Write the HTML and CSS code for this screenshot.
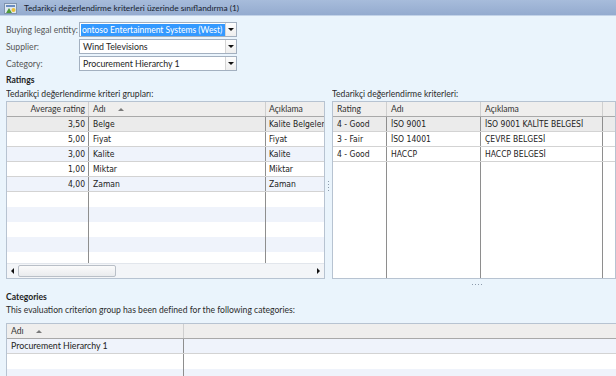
FILE: index.html
```html
<!DOCTYPE html>
<html lang="tr">
<head>
    <meta charset="UTF-8">
    <title>Tedarikçi değerlendirme</title>
    <link rel="stylesheet" href="styles.css">
</head>
<body>
    <div class="titlebar">
        <svg class="title-icon" width="13" height="12" viewBox="0 0 13 12">
            <rect x="0.5" y="1.5" width="12" height="10" fill="#dfe8f2" stroke="#7f93ad"/>
            <rect x="2" y="3" width="9" height="2" fill="#6a8cc0"/>
            <path d="M2 11 L5 6 L8 11 Z" fill="#4f9a3a"/>
            <circle cx="9.5" cy="8" r="2" fill="#e9c03a"/>
        </svg>
        <span>Tedarikçi değerlendirme kriterleri üzerinde sınıflandırma (1)</span>
    </div>

    <div class="header-form">
        <div class="field-row">
            <label>Buying legal entity:</label>
            <div class="combo">
                <div class="combo-text"><span class="selected-text">ontoso Entertainment Systems (West)</span></div>
                <div class="combo-btn"><span class="arrow-down"></span></div>
            </div>
        </div>
        <div class="field-row">
            <label>Supplier:</label>
            <div class="combo">
                <div class="combo-text">Wind Televisions</div>
                <div class="combo-btn"><span class="arrow-down"></span></div>
            </div>
        </div>
        <div class="field-row">
            <label>Category:</label>
            <div class="combo">
                <div class="combo-text">Procurement Hierarchy 1</div>
                <div class="combo-btn"><span class="arrow-down"></span></div>
            </div>
        </div>
    </div>

    <div class="section-title">Ratings</div>

    <div class="panes">
        <div class="pane pane-left">
            <div class="grid-label">Tedarikçi değerlendirme kriteri grupları:</div>
            <div class="grid grid-groups">
                <div class="grid-body">
                    <div class="row head">
                        <div class="cell g1 num">Average rating</div>
                        <div class="cell g2">Adı <span class="sort-up"></span></div>
                        <div class="cell g3">Açıklama</div>
                    </div>
                    <div class="row data current">
                        <div class="cell g1 num">3,50</div><div class="cell g2">Belge</div><div class="cell g3">Kalite Belgeler</div>
                    </div>
                    <div class="row data">
                        <div class="cell g1 num">5,00</div><div class="cell g2">Fiyat</div><div class="cell g3">Fiyat</div>
                    </div>
                    <div class="row data alt">
                        <div class="cell g1 num">3,00</div><div class="cell g2">Kalite</div><div class="cell g3">Kalite</div>
                    </div>
                    <div class="row data">
                        <div class="cell g1 num">1,00</div><div class="cell g2">Miktar</div><div class="cell g3">Miktar</div>
                    </div>
                    <div class="row data alt">
                        <div class="cell g1 num">4,00</div><div class="cell g2">Zaman</div><div class="cell g3">Zaman</div>
                    </div>
                    <div class="row filler"><div class="cell g1"></div><div class="cell g2"></div><div class="cell g3"></div></div>
                    <div class="row filler alt"><div class="cell g1"></div><div class="cell g2"></div><div class="cell g3"></div></div>
                    <div class="row filler"><div class="cell g1"></div><div class="cell g2"></div><div class="cell g3"></div></div>
                    <div class="row filler alt"><div class="cell g1"></div><div class="cell g2"></div><div class="cell g3"></div></div>
                    <div class="row filler"><div class="cell g1"></div><div class="cell g2"></div><div class="cell g3"></div></div>
                </div>
                <div class="hscroll">
                    <div class="sb-btn"><span class="arrow-left"></span></div>
                    <div class="sb-track"><div class="sb-thumb"></div></div>
                    <div class="sb-btn"><span class="arrow-right"></span></div>
                </div>
            </div>
        </div>

        <div class="vsplit"><span class="dots-v"></span></div>

        <div class="pane pane-right">
            <div class="grid-label">Tedarikçi değerlendirme kriterleri:</div>
            <div class="grid grid-criteria">
                <div class="grid-body">
                    <div class="row head">
                        <div class="cell r1">Rating</div>
                        <div class="cell r2">Adı</div>
                        <div class="cell r3">Açıklama</div>
                        <div class="cell r4"></div>
                    </div>
                    <div class="row data current">
                        <div class="cell r1">4 - Good</div><div class="cell r2">İSO 9001</div><div class="cell r3">İSO 9001 KALİTE BELGESİ</div><div class="cell r4"></div>
                    </div>
                    <div class="row data">
                        <div class="cell r1">3 - Fair</div><div class="cell r2">İSO 14001</div><div class="cell r3">ÇEVRE BELGESİ</div><div class="cell r4"></div>
                    </div>
                    <div class="row data">
                        <div class="cell r1">4 - Good</div><div class="cell r2">HACCP</div><div class="cell r3">HACCP BELGESİ</div><div class="cell r4"></div>
                    </div>
                    <div class="row filler tall"><div class="cell r1"></div><div class="cell r2"></div><div class="cell r3"></div><div class="cell r4"></div></div>
                </div>
            </div>
        </div>
    </div>

    <div class="hsplit"><span class="dots-h"></span></div>

    <div class="section-title">Categories</div>
    <div class="section-desc">This evaluation criterion group has been defined for the following categories:</div>

    <div class="grid grid-categories">
        <div class="row head">
            <div class="cell k1">Adı <span class="sort-up"></span></div>
            <div class="cell k2"></div>
        </div>
        <div class="row data alt">
            <div class="cell k1">Procurement Hierarchy 1</div><div class="cell k2"></div>
        </div>
        <div class="row filler"><div class="cell k1"></div><div class="cell k2"></div></div>
        <div class="row filler alt"><div class="cell k1"></div><div class="cell k2"></div></div>
    </div>
</body>
</html>
```

FILE: styles.css
```css
* {
    box-sizing: border-box;
    margin: 0;
    padding: 0;
}

body {
    width: 616px;
    height: 376px;
    overflow: hidden;
    background-color: #eaf4fc;
    font-family: Lato, "Open Sans", sans-serif;
    font-size: 8.6px;
    color: #2b2b2b;
}

.titlebar {
    display: flex;
    align-items: center;
    gap: 7px;
    height: 16px;
    padding-left: 4px;
    background: linear-gradient(#a7bcdb, #94abcf);
    border-bottom: 1px solid #c3d3e8;
    color: #17212e;
    font-size: 8.4px;
}

.title-icon {
    flex: none;
}

/* header fields */
.header-form {
    padding: 6px 0 0 6px;
}

.field-row {
    display: flex;
    align-items: center;
    height: 15px;
    margin-bottom: 2px;
}

.field-row label {
    width: 73px;
    color: #555;
    white-space: nowrap;
}

.combo {
    display: flex;
    width: 158px;
    height: 15px;
    background-color: white;
    border: 1px solid #a3b0c0;
}

.combo-text {
    flex: 1;
    padding-left: 3px;
    line-height: 13px;
    font-size: 8.8px;
    color: #1e1e1e;
    white-space: nowrap;
    overflow: hidden;
}

.selected-text {
    display: inline-block;
    width: 146px;
    margin-left: -2px;
    padding-left: 1px;
    background-color: #3399ff;
    color: white;
    font-size: 8.5px;
}

.combo-btn {
    display: flex;
    align-items: center;
    justify-content: center;
    width: 11px;
    background: linear-gradient(#fdfdfd, #eeeeee);
    border-left: 1px solid #d4d4d4;
}

.arrow-down {
    border-left: 3px solid transparent;
    border-right: 3px solid transparent;
    border-top: 3px solid #111;
}

.section-title {
    padding-left: 6px;
    height: 14px;
    line-height: 14px;
    font-weight: bold;
    color: #1e1e1e;
    margin-top: 1px;
}

.section-desc {
    padding-left: 6px;
    height: 13px;
    line-height: 13px;
}

/* panes */
.panes {
    display: flex;
    height: 192px;
    padding-left: 6px;
}

.pane {
    display: flex;
    flex-direction: column;
    overflow: hidden;
}

.pane-left {
    width: 319px;
}

.pane-right {
    flex: 1;
}

.grid-label {
    height: 14px;
    line-height: 15px;
    white-space: nowrap;
}

.vsplit {
    display: flex;
    justify-content: center;
    align-items: center;
    width: 7px;
    padding-top: 8px;
}

.dots-v {
    width: 1px;
    height: 12px;
    background: repeating-linear-gradient(#8c9aab 0 1px, transparent 1px 3px);
}

.hsplit {
    display: flex;
    justify-content: center;
    align-items: center;
    height: 10px;
    padding-left: 340px;
}

.dots-h {
    width: 12px;
    height: 1px;
    background: repeating-linear-gradient(90deg, #8c9aab 0 1px, transparent 1px 3px);
}

/* grids */
.grid {
    display: flex;
    flex-direction: column;
    flex: 1;
    background-color: white;
    border: 1px solid #b7c3d1;
    overflow: hidden;
}

.grid-body {
    flex: 1;
    overflow: hidden;
}

.row {
    display: flex;
    height: 15px;
    white-space: nowrap;
}

.cell {
    flex: none;
    padding: 0 3px 0 4px;
    line-height: 14px;
    overflow: hidden;
}

.row.head {
    background-color: #efeeed;
    border-bottom: 1px solid #a9a9a9;
    color: #333;
}

.row.head .cell {
    border-right: 1px solid #cfcfcf;
}

.row.data {
    border-bottom: 1px solid #d3d3d3;
    font-family: "DejaVu Sans Condensed", "DejaVu Sans", sans-serif;
    font-size: 8.5px;
    color: #222;
}

.row.data .cell,
.row.filler .cell {
    border-right: 1px solid #8e8e8e;
}

.row.alt {
    background-color: #eff3fb;
}

.row.current {
    background-color: #ebebeb;
}

.row.tall {
    height: 140px;
}

.num {
    text-align: right;
}

.g3 {
    padding-left: 3px;
}

.sort-up {
    display: inline-block;
    margin-left: 10px;
    vertical-align: middle;
    border-left: 3px solid transparent;
    border-right: 3px solid transparent;
    border-bottom: 3px solid #7a7a7a;
}

.g1 { width: 82px; }
.g2 { width: 177px; }
.g3 { width: 90px; }

.r1 { width: 54px; }
.r2 { width: 94px; }
.r3 { width: 122px; }
.r4 { width: 40px; }

.k1 { width: 177px; }
.k2 { width: 440px; }

.grid-categories {
    margin: 6px 0 0 6px;
    width: 620px;
}

.grid-categories .row.data {
    font-family: Lato, "Open Sans", sans-serif;
    font-size: 8.8px;
}

/* horizontal scrollbar */
.hscroll {
    display: flex;
    height: 15px;
    background-color: #f3f5f8;
    border-top: 1px solid #e2e6ec;
}

.sb-btn {
    display: flex;
    align-items: center;
    justify-content: center;
    width: 11px;
}

.arrow-left {
    border-top: 3px solid transparent;
    border-bottom: 3px solid transparent;
    border-right: 3px solid #111;
}

.arrow-right {
    border-top: 3px solid transparent;
    border-bottom: 3px solid transparent;
    border-left: 3px solid #111;
}

.sb-track {
    flex: 1;
    padding: 1px 0;
}

.sb-thumb {
    width: 98px;
    height: 12px;
    background: linear-gradient(#fbfbfb, #e9ebee);
    border: 1px solid #b9bfc7;
    border-radius: 2px;
}
```
